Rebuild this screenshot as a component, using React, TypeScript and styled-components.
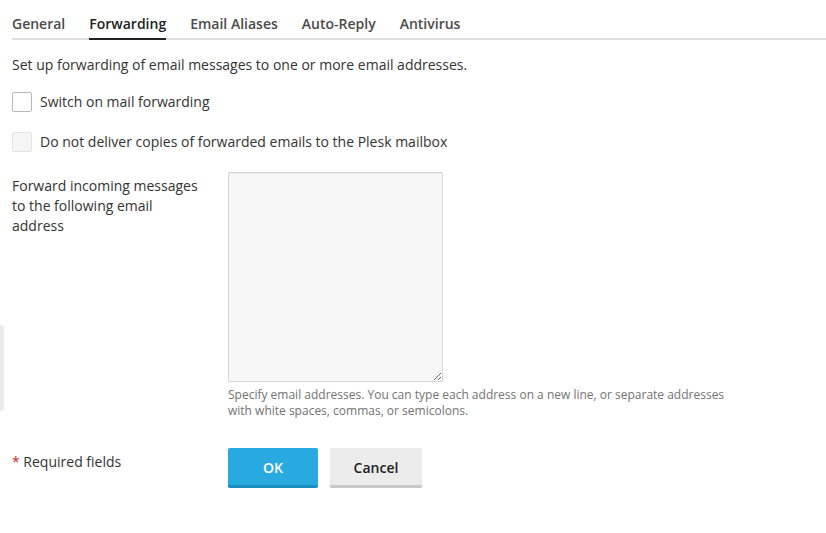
import React from 'react';
import styled, { createGlobalStyle } from 'styled-components';

const GlobalStyle = createGlobalStyle`
  html, body {
    margin: 0;
    padding: 0;
    background: #fff;
  }
  body {
    font-family: 'Open Sans', 'DejaVu Sans', sans-serif;
    font-size: 14px;
    line-height: 20px;
    color: #333;
  }
`;

const Page = styled.div`
  position: relative;
  padding: 14px 0 40px 12px;
`;

const SideHandle = styled.div`
  position: absolute;
  left: 0;
  top: 325px;
  width: 4px;
  height: 86px;
  background: #ebebeb;
  border-radius: 0 3px 3px 0;
`;

const TabBar = styled.div`
  display: flex;
  gap: 24px;
  border-bottom: 2px solid #dedede;
`;

const Tab = styled.div<{ active?: boolean }>`
  font-weight: 600;
  font-size: 14px;
  line-height: 20px;
  padding-bottom: 4px;
  margin-bottom: -2px;
  color: ${p => (p.active ? '#222' : '#4b4b4b')};
  border-bottom: 2px solid ${p => (p.active ? '#222' : 'transparent')};
`;

const Intro = styled.p`
  margin: 15px 0 17px;
`;

const CheckRow = styled.label<{ disabled?: boolean }>`
  display: flex;
  align-items: center;
  gap: 8px;
  height: 20px;
  margin-bottom: 20px;
  cursor: ${p => (p.disabled ? 'default' : 'pointer')};
`;

const Box = styled.input`
  appearance: none;
  margin: 0;
  width: 20px;
  height: 20px;
  box-sizing: border-box;
  border: 1px solid #b8b8b8;
  border-radius: 2px;
  background: #fff;

  &:disabled {
    border-color: #e3e3e3;
    background: #f5f5f5;
  }
`;

const FormRow = styled.div`
  display: grid;
  grid-template-columns: 216px 1fr;
`;

const FieldLabel = styled.div`
  padding-top: 4px;
  padding-right: 24px;
`;

const FieldArea = styled.div`
  display: flex;
  flex-direction: column;
`;

const TextArea = styled.textarea`
  width: 215px;
  height: 210px;
  box-sizing: border-box;
  margin: 0;
  background: #f7f7f7;
  border: 1px solid #d6d6d6;
  border-top-color: #cfcfcf;
  box-shadow: inset 0 1px 1px rgba(0, 0, 0, 0.04);
  border-radius: 2px;
  font-family: inherit;
  font-size: 14px;
`;

const Hint = styled.div`
  max-width: 500px;
  margin-top: 5px;
  font-size: 12px;
  line-height: 16px;
  color: #737373;
`;

const FooterRow = styled(FormRow)`
  margin-top: 29px;
`;

const Star = styled.span`
  color: #d02d2d;
`;

const Buttons = styled.div`
  display: flex;
  gap: 12px;
`;

const Button = styled.button<{ primary?: boolean }>`
  height: 40px;
  box-sizing: border-box;
  padding: 2px 16px 0;
  border: none;
  border-radius: 2px;
  font-family: inherit;
  font-size: 14px;
  font-weight: 600;
  color: ${p => (p.primary ? '#fff' : '#222')};
  background: ${p => (p.primary ? '#28aae1' : '#ececec')};
  border-bottom: 3px solid ${p => (p.primary ? '#1b8dbd' : '#c8c8c8')};
  min-width: ${p => (p.primary ? '90px' : '92px')};
`;

const tabs = ['General', 'Forwarding', 'Email Aliases', 'Auto-Reply', 'Antivirus'];

export default function App() {
  return (
    <>
      <GlobalStyle />
      <Page>
        <SideHandle />
        <TabBar>
          {tabs.map(t => (
            <Tab key={t} active={t === 'Forwarding'}>{t}</Tab>
          ))}
        </TabBar>
        <Intro>Set up forwarding of email messages to one or more email addresses.</Intro>
        <CheckRow>
          <Box type="checkbox" />
          Switch on mail forwarding
        </CheckRow>
        <CheckRow disabled>
          <Box type="checkbox" disabled />
          Do not deliver copies of forwarded emails to the Plesk mailbox
        </CheckRow>
        <FormRow>
          <FieldLabel>Forward incoming messages to the following email address</FieldLabel>
          <FieldArea>
            <TextArea />
            <Hint>
              Specify email addresses. You can type each address on a new line, or separate addresses
              with white spaces, commas, or semicolons.
            </Hint>
          </FieldArea>
        </FormRow>
        <FooterRow>
          <FieldLabel>
            <Star>*</Star> Required fields
          </FieldLabel>
          <Buttons>
            <Button primary>OK</Button>
            <Button>Cancel</Button>
          </Buttons>
        </FooterRow>
      </Page>
    </>
  );
}
